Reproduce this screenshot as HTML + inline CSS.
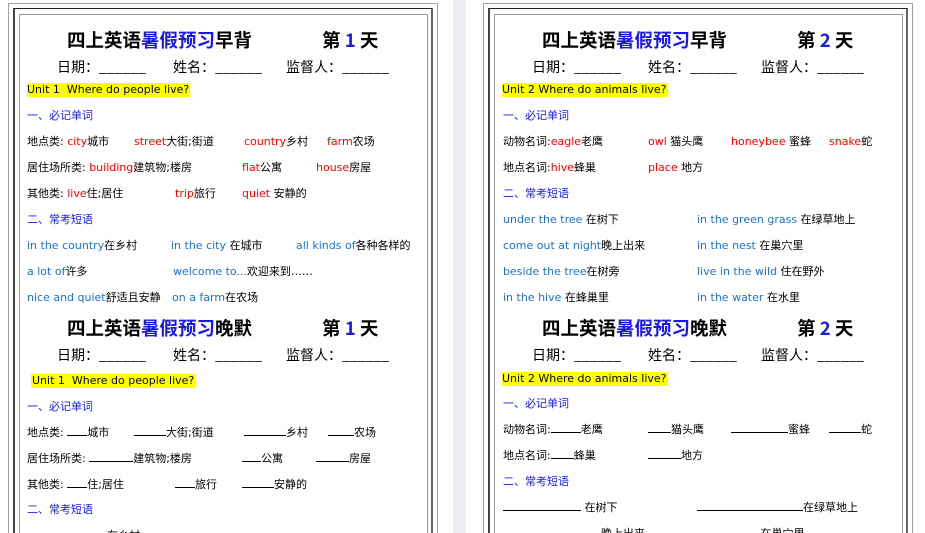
<!DOCTYPE html>
<html><head><meta charset="utf-8"><style>
*{margin:0;padding:0;box-sizing:border-box}
html,body{width:925px;height:533px;overflow:hidden}
body{background:#fff;font-family:"DejaVu Sans","Noto Sans CJK SC",sans-serif;font-size:11px;color:#000}
#w{position:relative;width:925px;height:533px;overflow:hidden}
.strip{position:absolute;left:453px;top:0;width:13px;height:533px;background:#ededf3}
.b{position:absolute;height:560px}
.b1{border:1px solid #a0a0a0;top:3px}
.b2{border:1px solid #222;border-right:2px solid #666;border-left:2px solid #444;top:8px}
.b3{border:1px solid #999;top:14px}
.t{position:absolute;white-space:nowrap;line-height:14px}
.tt{font-size:18.5px;font-weight:bold;line-height:22px;font-family:"Noto Sans CJK SC","DejaVu Sans",sans-serif}
.dl{font-size:14px;line-height:16px;font-family:"Noto Sans CJK SC","DejaVu Sans",sans-serif}
.bl{color:#1a1ae6}
.r{color:#f00}
.p{color:#1f73c4}
.h{color:#1a1aee}
.y{background:#ffff00}
.u{display:inline-block;border-bottom:1px solid #000;height:10px;vertical-align:baseline}
</style></head><body><div id="w">
<div class="strip"></div>
<div class="b b1" style="left:8px;width:430px"></div>
<div class="b b2" style="left:13px;width:420px"></div>
<div class="b b3" style="left:19px;width:409px"></div>
<div class="b b1" style="left:483px;width:430px"></div>
<div class="b b2" style="left:488px;width:420px"></div>
<div class="b b3" style="left:494px;width:409px"></div>

<div class="t tt" style="left:67px;top:29px">四上英语<span class="bl">暑假预习</span>早背</div>
<div class="t tt" style="left:322px;top:29px">第 <span class="bl">1</span> 天</div>
<div class="t dl" style="left:57px;top:59px">日期：______</div>
<div class="t dl" style="left:173px;top:59px">姓名：______</div>
<div class="t dl" style="left:286px;top:59px">监督人：______</div>
<div class="t y" style="left:27px;top:83px;padding-right:1px">Unit 1&nbsp; Where do people live?</div>
<div class="t h" style="left:27px;top:109px">一、必记单词</div>
<div class="t" style="left:27px;top:135px">地点类: <span class="r">city</span>城市</div>
<div class="t" style="left:134px;top:135px"><span class="r">street</span>大街;街道</div>
<div class="t" style="left:244px;top:135px"><span class="r">country</span>乡村</div>
<div class="t" style="left:327px;top:135px"><span class="r">farm</span>农场</div>
<div class="t" style="left:27px;top:161px">居住场所类: <span class="r">building</span>建筑物;楼房</div>
<div class="t" style="left:242px;top:161px"><span class="r">flat</span>公寓</div>
<div class="t" style="left:316px;top:161px"><span class="r">house</span>房屋</div>
<div class="t" style="left:27px;top:187px">其他类: <span class="r">live</span>住;居住</div>
<div class="t" style="left:175px;top:187px"><span class="r">trip</span>旅行</div>
<div class="t" style="left:242px;top:187px"><span class="r">quiet</span> 安静的</div>
<div class="t h" style="left:27px;top:213px">二、常考短语</div>
<div class="t" style="left:27px;top:239px"><span class="p">in the country</span>在乡村</div>
<div class="t" style="left:171px;top:239px"><span class="p">in the city</span> 在城市</div>
<div class="t" style="left:296px;top:239px"><span class="p">all kinds of</span>各种各样的</div>
<div class="t" style="left:27px;top:265px"><span class="p">a lot of</span>许多</div>
<div class="t" style="left:173px;top:265px"><span class="p">welcome to...</span>欢迎来到……</div>
<div class="t" style="left:27px;top:291px"><span class="p">nice and quiet</span>舒适且安静</div>
<div class="t" style="left:172px;top:291px"><span class="p">on a farm</span>在农场</div>

<div class="t tt" style="left:67px;top:317px">四上英语<span class="bl">暑假预习</span>晚默</div>
<div class="t tt" style="left:322px;top:317px">第 <span class="bl">1</span> 天</div>
<div class="t dl" style="left:57px;top:347px">日期：______</div>
<div class="t dl" style="left:173px;top:347px">姓名：______</div>
<div class="t dl" style="left:286px;top:347px">监督人：______</div>
<div class="t y" style="left:31px;top:374px;padding:0 1px">Unit 1&nbsp; Where do people live?</div>
<div class="t h" style="left:27px;top:400px">一、必记单词</div>
<div class="t" style="left:27px;top:426px">地点类: <span class="u" style="width:20px"></span>城市</div>
<div class="t" style="left:134px;top:426px"><span class="u" style="width:32px"></span>大街;街道</div>
<div class="t" style="left:244px;top:426px"><span class="u" style="width:42px"></span>乡村</div>
<div class="t" style="left:328px;top:426px"><span class="u" style="width:26px"></span>农场</div>
<div class="t" style="left:27px;top:452px">居住场所类: <span class="u" style="width:44px"></span>建筑物;楼房</div>
<div class="t" style="left:242px;top:452px"><span class="u" style="width:19px"></span>公寓</div>
<div class="t" style="left:316px;top:452px"><span class="u" style="width:33px"></span>房屋</div>
<div class="t" style="left:27px;top:478px">其他类: <span class="u" style="width:20px"></span>住;居住</div>
<div class="t" style="left:175px;top:478px"><span class="u" style="width:20px"></span>旅行</div>
<div class="t" style="left:242px;top:478px"><span class="u" style="width:32px"></span>安静的</div>
<div class="t h" style="left:27px;top:503px">二、常考短语</div>
<div class="t" style="left:27px;top:529px"><span class="u" style="width:80px"></span>在乡村</div>

<div class="t tt" style="left:542px;top:29px">四上英语<span class="bl">暑假预习</span>早背</div>
<div class="t tt" style="left:797px;top:29px">第 <span class="bl">2</span> 天</div>
<div class="t dl" style="left:532px;top:59px">日期：______</div>
<div class="t dl" style="left:648px;top:59px">姓名：______</div>
<div class="t dl" style="left:761px;top:59px">监督人：______</div>
<div class="t y" style="left:502px;top:83px;padding-right:1px">Unit 2 Where do animals live?</div>
<div class="t h" style="left:503px;top:109px">一、必记单词</div>
<div class="t" style="left:503px;top:135px">动物名词:<span class="r">eagle</span>老鹰</div>
<div class="t" style="left:648px;top:135px"><span class="r">owl</span> 猫头鹰</div>
<div class="t" style="left:731px;top:135px"><span class="r">honeybee</span> 蜜蜂</div>
<div class="t" style="left:829px;top:135px"><span class="r">snake</span>蛇</div>
<div class="t" style="left:503px;top:161px">地点名词:<span class="r">hive</span>蜂巢</div>
<div class="t" style="left:648px;top:161px"><span class="r">place</span> 地方</div>
<div class="t h" style="left:503px;top:187px">二、常考短语</div>
<div class="t" style="left:503px;top:213px"><span class="p">under the tree</span> 在树下</div>
<div class="t" style="left:697px;top:213px"><span class="p">in the green grass</span> 在绿草地上</div>
<div class="t" style="left:503px;top:239px"><span class="p">come out at night</span>晚上出来</div>
<div class="t" style="left:697px;top:239px"><span class="p">in the nest</span> 在巢穴里</div>
<div class="t" style="left:503px;top:265px"><span class="p">beside the tree</span>在树旁</div>
<div class="t" style="left:697px;top:265px"><span class="p">live in the wild</span> 住在野外</div>
<div class="t" style="left:503px;top:291px"><span class="p">in the hive</span> 在蜂巢里</div>
<div class="t" style="left:697px;top:291px"><span class="p">in the water</span> 在水里</div>

<div class="t tt" style="left:542px;top:317px">四上英语<span class="bl">暑假预习</span>晚默</div>
<div class="t tt" style="left:797px;top:317px">第 <span class="bl">2</span> 天</div>
<div class="t dl" style="left:532px;top:347px">日期：______</div>
<div class="t dl" style="left:648px;top:347px">姓名：______</div>
<div class="t dl" style="left:761px;top:347px">监督人：______</div>
<div class="t y" style="left:502px;top:372px;padding-right:1px">Unit 2 Where do animals live?</div>
<div class="t h" style="left:503px;top:397px">一、必记单词</div>
<div class="t" style="left:503px;top:423px">动物名词:<span class="u" style="width:30px"></span>老鹰</div>
<div class="t" style="left:648px;top:423px"><span class="u" style="width:23px"></span>猫头鹰</div>
<div class="t" style="left:731px;top:423px"><span class="u" style="width:57px"></span>蜜蜂</div>
<div class="t" style="left:829px;top:423px"><span class="u" style="width:32px"></span>蛇</div>
<div class="t" style="left:503px;top:449px">地点名词:<span class="u" style="width:23px"></span>蜂巢</div>
<div class="t" style="left:648px;top:449px"><span class="u" style="width:33px"></span>地方</div>
<div class="t h" style="left:503px;top:475px">二、常考短语</div>
<div class="t" style="left:503px;top:501px"><span class="u" style="width:78px"></span> 在树下</div>
<div class="t" style="left:697px;top:501px"><span class="u" style="width:106px"></span>在绿草地上</div>
<div class="t" style="left:503px;top:527px"><span class="u" style="width:98px"></span>晚上出来</div>
<div class="t" style="left:697px;top:527px"><span class="u" style="width:60px"></span> 在巢穴里</div>
</div></body></html>
